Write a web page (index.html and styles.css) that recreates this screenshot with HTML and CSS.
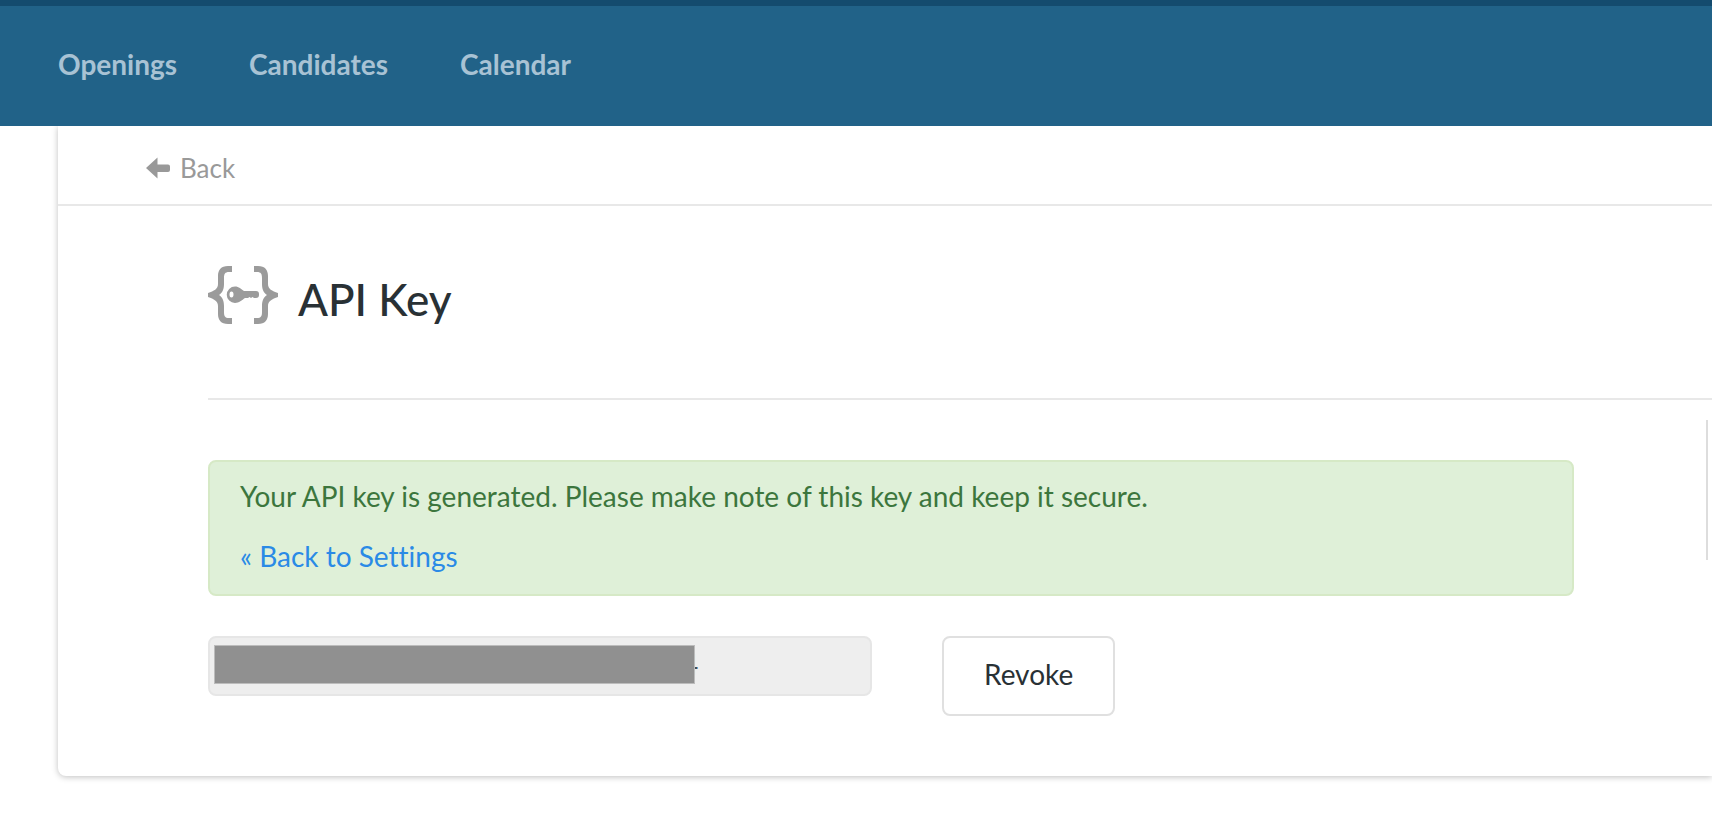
FILE: index.html
```html
<!DOCTYPE html>
<html lang="en">
<head>
<meta charset="utf-8">
<title>API Key</title>
<link rel="stylesheet" href="styles.css">
</head>
<body>
<header class="topbar">
  <nav class="nav">
    <a href="#">Openings</a>
    <a href="#">Candidates</a>
    <a href="#">Calendar</a>
  </nav>
</header>
<main class="card">
  <div class="crumb">
    <a class="back" href="#">
      <svg class="back-icon" viewBox="0 0 24 22" aria-hidden="true"><path d="M0 11 11.500 0.500V7.500H22q2 0 2 2v3.500q0 2-2 2H11.500V21.500Z" fill="currentColor"/></svg>
      Back
    </a>
  </div>
  <div class="content">
    <div class="heading">
      <svg class="heading-icon" viewBox="0 0 70 58" fill="#9b9b9b" aria-hidden="true">
        <path d="M24 0H20C13 0 10 4 10 10V18C10 23 6 25 0 27V31C6 33 10 35 10 40V48C10 54 13 58 20 58H24V52H21C17 52 16 50 16 46V40C16 34 14 31 11 29C14 27 16 24 16 18V12C16 8 17 6 21 6H24Z"/>
        <path d="M46 0H50C57 0 60 4 60 10V18C60 23 64 25 70 27V31C64 33 60 35 60 40V48C60 54 57 58 50 58H46V52H49C53 52 54 50 54 46V40C54 34 56 31 59 29C56 27 54 24 54 18V12C54 8 53 6 49 6H46Z"/>
        <path fill-rule="evenodd" d="M27 20.500C31 20.500 33 23 36 25H48Q51 25 51 28V29Q51 32 48 32H46L44.500 31 43 32 41.500 31 40 32H37C34 34 31 37 27 37A8.250 8.250 0 0 1 27 20.500ZM23.500 25.500A2 3 0 1 0 23.500 31.500A2 3 0 1 0 23.500 25.500Z"/>
      </svg>
      <h1>API Key</h1>
    </div>
    <div class="columns">
      <section class="primary">
        <div class="alert">
          <p>Your API key is generated. Please make note of this key and keep it secure.</p>
          <p><a href="#">« Back to Settings</a></p>
        </div>
        <form class="key-form">
          <div class="key-field">
            <input type="text" value="4" aria-label="API key" readonly>
            <span class="mask"></span>
          </div>
          <button class="button" type="button">Revoke</button>
        </form>
      </section>
      <aside class="side"></aside>
    </div>
  </div>
</main>
</body>
</html>
```
FILE: styles.css
```css
* { box-sizing: border-box; }
body {
  margin: 0;
  padding-bottom: 40px;
  background: #fff;
  color: #293135;
  font-family: Lato, "Open Sans", sans-serif;
  font-size: 28px;
  line-height: 40px;
  font-variant-ligatures: none;
}
a { text-decoration: none; }
p, h1 { margin: 0; }
.topbar {
  position: relative;
  padding: 38px 58px 42px;
  background: #216288;
  border-top: 6px solid #144b6e;
}
.nav { display: flex; gap: 72px; }
.nav a { color: #a8c2d4; font-weight: 700; }
.card {
  margin-left: 58px;
  background: #fff;
  border-bottom-left-radius: 8px;
  box-shadow: 0 1px 6px rgba(0, 0, 0, 0.25);
}
.crumb { padding: 22px 88px 16px; border-bottom: 2px solid #e8e8e8; }
.back { display: inline-flex; align-items: center; gap: 10px; color: #999; font-size: 26px; }
.back-icon { width: 24px; height: 22px; }
.content { padding: 60px 0 60px 150px; }
.heading {
  display: flex;
  align-items: flex-start;
  gap: 20px;
  padding-bottom: 74px;
  border-bottom: 2px solid #e8e8e8;
}
.heading-icon { width: 70px; height: 58px; }
h1 { padding-top: 8px; font-size: 44px; line-height: 50px; font-weight: 500; }
.columns { display: flex; align-items: flex-start; padding-top: 20px; }
.primary { flex: 1; padding: 40px 132px 0 0; }
.alert {
  display: flex;
  flex-direction: column;
  gap: 20px;
  padding: 14px 30px 18px;
  color: #3c763d;
  background: #dff0d8;
  border: 2px solid #d6e9c6;
  border-radius: 8px;
}
.alert a { color: #2a8ae6; }
.key-form { display: flex; align-items: flex-start; gap: 70px; padding-top: 40px; }
.key-field { position: relative; flex: 0 1 664px; }
.key-field input {
  display: block;
  width: 100%;
  height: 60px;
  padding: 0 20px 4px 472px;
  color: #444d55;
  background: #eee;
  border: 2px solid #e6e6e6;
  border-radius: 8px;
  font: inherit;
}
.mask {
  position: absolute;
  top: 9px;
  left: 6px;
  width: 481px;
  height: 39px;
  background: #909090;
  border: 1px solid #bcbcbc;
}
.button {
  padding: 16px 40px 20px;
  color: #293135;
  background: #fff;
  border: 2px solid #e0e0e0;
  border-radius: 8px;
  font: inherit;
}
.side { width: 6px; height: 140px; border-left: 2px solid #ddd; }
```
